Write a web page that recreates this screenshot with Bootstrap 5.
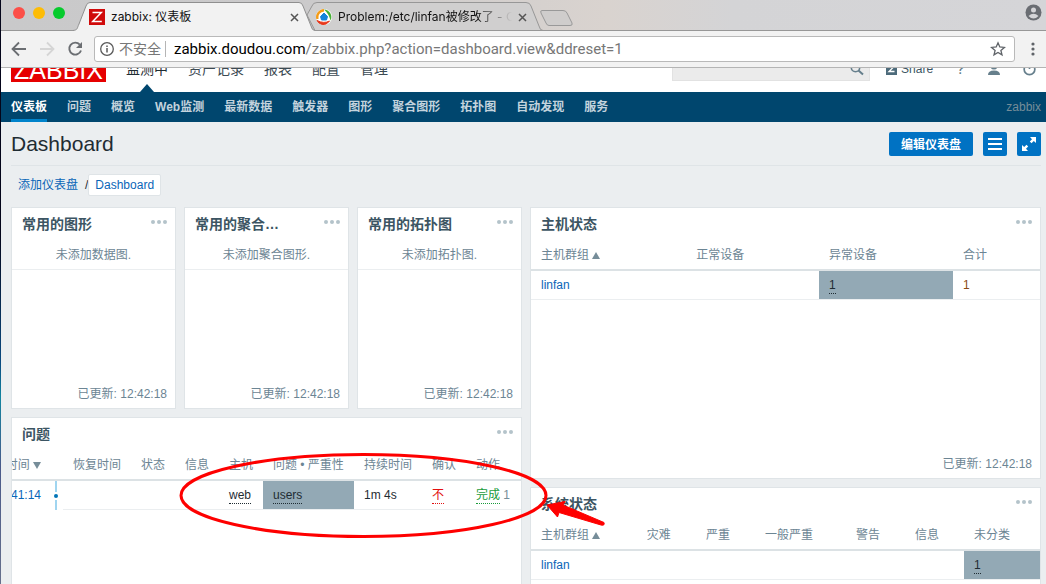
<!DOCTYPE html>
<html lang="zh-CN">
<head>
<meta charset="utf-8">
<meta name="viewport" content="width=device-width, initial-scale=1">
<title>zabbix: 仪表板</title>
<link href="https://cdn.jsdelivr.net/npm/bootstrap@5.3.0/dist/css/bootstrap.min.css" rel="stylesheet">
<style>
  body { font-family: "Liberation Sans", "Noto Sans CJK SC", sans-serif; font-size: 12px; line-height: 16px; color: #1f2c33; background: #ebeef0; }
  a { color: #0a66b8; text-decoration: none; }
  svg { display: block; flex: none; }

  /* browser window */
  .win { padding-left: 1px; background: linear-gradient(#04051a 0 40%, #0a4a80 62%, #1284a0 68%, #4a5a8a 80%, #66708c) left / 1px 100% no-repeat; }
  .tabstrip { height: 31px; background: linear-gradient(90deg, #c9c9ca, #cbcacb 30%, #d9d3cf 58%, #d4d4d6 70%, #d5d5d8); border-bottom: 1px solid #979797; font-family: Inter, "Noto Sans CJK SC", sans-serif; color: #111; }
  .lights { width: 72px; gap: 8px; padding-left: 12px; height: 25px; }
  .lights i { width: 12px; height: 12px; border-radius: 50%; }
  .tab { width: 242px; height: 31px; padding: 3px 16px 0 16px; margin-right: -8px; gap: 6px; }
  .tab-back { width: 236px; padding-left: 9px; }
  .tab-bg { position: absolute; left: 0; top: 0; z-index: -1; }
  .tab button, .toolbar button, .dots { border: 0; background: none; padding: 0; }
  .tab-name { -webkit-mask-image: linear-gradient(90deg, #000 80%, transparent); mask-image: linear-gradient(90deg, #000 80%, transparent); }
  .toolbar { height: 37px; background: #f2f2f2; border-bottom: 1px solid #b4b4b4; padding: 0 3px 0 10px; }
  .omni { height: 26px; background: #fff; border: 1px solid #b9b9b9; border-radius: 3px; font: 14px/20px Roboto, "Noto Sans CJK SC", sans-serif; color: #777; margin-left: 11px; }
  .address { font-size: 15px; }
  .omni-sep { width: 1px; height: 16px; background: #b5b5b5; }

  /* zabbix header, scrolled half out of view */
  .topbar { height: 24px; background: #fff; }
  .topbar-row { height: 46px; margin-top: -22px; padding: 0 10px; }
  .logo { background: #e60000; color: #fff; width: 95px; height: 25px; font-size: 25px; line-height: 27px; }
  .topmenu { gap: 20px; font-size: 14px; line-height: 20px; padding-left: 20px; }
  .topmenu a { color: #3c4a53; }
  .topmenu .active { color: #1f2c33; position: relative; }
  .topmenu .active::after { content: ""; position: absolute; left: 14px; top: 25px; border: 7px solid transparent; border-bottom: 8px solid #00466e; border-top: 0; }
  .search { width: 198px; height: 24px; background: #ebebeb; border: 1px solid #e2e2e2; padding-right: 5px; }
  .search input { background: none; border: 0; min-width: 0; }
  .tool { margin-right: 23px; color: #667f8c; }
  .share { color: #3c5563; }
  .subnav { height: 30px; background: #00466e; padding: 0 5px 0 10px; gap: 20px; font-weight: 700; }
  .subnav a { color: #c3d3dd; line-height: 30px; height: 30px; }
  .subnav .active { color: #fff; box-shadow: inset 0 -3px #0083cb; }
  .user { color: #768d99; font-weight: 400; }

  /* dashboard */
  main { padding: 0 5px 0 10px; }
  h1 { font-size: 21px; line-height: 24px; font-weight: 400; }
  .title-row { height: 44px; border-bottom: 1px solid #dfe4e7; gap: 10px; }
  .act { height: 24px; min-width: 24px; border: 0; border-radius: 2px; background: #0072c3; color: #fff; font-size: 12px; line-height: 26px; font-weight: 700; padding: 0; }
  .act-wide { width: 84px; }
  .crumbs { height: 41px; padding: 0 0 3px 7px; }
  .here { background: #fff; border: 1px solid #dfe4e7; border-radius: 2px; height: 22px; line-height: 20px; padding: 0 6px; }
  .slash { margin-left: 7px; }
  .panel { background: #fff; border: 1px solid #dfe4e7; }
  .h-small { min-height: 202px; }
  .h-mid { min-height: 272px; }
  .panel-head { height: 32px; padding: 0 8px 0 10px; }
  h2 { font-size: 14px; line-height: 20px; font-weight: 700; color: #3c5563; }
  .dots { color: #b4c3ca; height: 16px; margin-top: -4px; }
  .none { height: 30px; line-height: 31px; border-bottom: 1px solid #ebeef0; text-align: center; color: #6c8594; }
  .foot { height: 30px; line-height: 32px; padding-right: 8px; text-align: right; color: #6c8594; }
  .grid { width: 100%; table-layout: fixed; border-collapse: separate; border-spacing: 0; white-space: nowrap; }
  .grid th { height: 31px; font-weight: 400; color: #6c8594; padding: 0 0 0 10px; border-bottom: 2px solid #dce2e5; }
  .grid td { height: 29px; padding: 0 0 0 10px; border-bottom: 1px solid #ebeef0; }
  .grid .sev { background: #93a9b5; color: #1f2c33; background-clip: padding-box; }
  .dot-link { color: #1f2c33; border-bottom: 1px dotted; display: inline-block; line-height: 15px; }
  .up, .down { display: inline-block; border: 4px solid transparent; }
  .up { border-bottom: 7px solid #768d99; border-top: 0; }
  .down { border-top: 7px solid #768d99; border-bottom: 0; }
  /* the problem table is wider than its panel and scrolled to its end */
  .wide { width: calc(100% + 29px); flex: none; }
  .grid .time { padding: 0 6px 0 0; text-align: right; border-bottom-color: #fff; }
  .grid th.time { border-bottom-color: #dce2e5; }
  .grid .line { padding: 0 0 0 7px; border-bottom: 0; }
  .mark-up { position: absolute; left: 166px; top: 33px; z-index: 3; pointer-events: none; }
  .c-time { width: 64px; } .c-line { width: 16px; } .c-4 { width: 68px; } .c-2 { width: 44px; } .c-act { width: 55px; }
  .a1 { width: 30.5%; } .a2 { width: 26.1%; } .a3 { width: 26.3%; }
  .b1 { width: 20.8%; } .b2 { width: 11.6%; } .b3 { width: 17.9%; }
</style>
</head>
<body>
<svg class="d-none">
  <symbol id="more" viewBox="0 0 16 4"><g fill="currentColor"><circle cx="2" cy="2" r="2"/><circle cx="8" cy="2" r="2"/><circle cx="14" cy="2" r="2"/></g></symbol>
</svg>
<div class="win vh-100 overflow-hidden d-flex flex-column">
  <div class="tabstrip d-flex flex-shrink-0">
    <div class="lights d-flex align-items-center"><i style="background:#fc4f48"></i><i style="background:#fdbc06"></i><i style="background:#06cb2d"></i></div>
    <div class="tab position-relative d-flex align-items-center" style="z-index:2">
      <svg class="tab-bg" width="242" height="31"><path d="M0 30.5C5 30 4 28 6 24L13 6Q14 2.500 17 2.500H226Q229 2.500 230 6L238 26Q239 30.500 242 30.500V31H0Z" fill="#f2f2f2"/><path d="M0 30.500C5 30 4 28 6 24L13 6Q14 2.500 17 2.500H226Q229 2.500 230 6L238 26Q239 30.500 242 30.500" fill="none" stroke="#8f8f8f"/></svg>
      <svg width="16" height="16"><path fill="#d00a0a" d="M0 0H16V16H0Z"/><path d="M3.500 3.500H12.300L3.700 12.500H12.800" fill="none" stroke="#fff" stroke-width="1.500"/></svg>
      <span class="flex-grow-1">zabbix: 仪表板</span>
      <button type="button" aria-label="关闭"><svg width="9" height="9"><path d="M1 1L8 8M8 1L1 8" stroke="#555" stroke-width="1.500"/></svg></button>
    </div>
    <div class="tab tab-back position-relative d-flex align-items-center" style="z-index:1">
      <svg class="tab-bg" width="236" height="31"><path d="M0 15L5 6Q6 2.500 10 2.500H219Q223 2.500 224 6L232 26Q233 30.500 236 30.500H8Z" fill="#d0cfcf" stroke="#979797"/></svg>
      <svg width="16" height="16"><circle cx="8" cy="8" r="8" fill="#fff"/><path d="M1.500 10A7 7 0 0 1 8 1.200" fill="none" stroke="#f49b16" stroke-width="2.400"/><path d="M8 0.500A7.500 7.500 0 0 1 14.500 11.500Q13 5 8 0.500Z" fill="#48b035"/><path d="M1 11.500Q8 15 13.500 12Q9 18 3 14Z" fill="#e8381b" stroke="#e8381b"/><path d="M8 4L11.500 7.500L10.500 11H5.500L4.500 7.500Z" fill="#1583da" stroke="#1583da" stroke-linejoin="round"/></svg>
      <span class="flex-grow-1 text-nowrap overflow-hidden tab-name">Problem:/etc/linfan被修改了 - C</span>
      <button type="button" aria-label="关闭"><svg width="9" height="9"><path d="M1 1L8 8M8 1L1 8" stroke="#555" stroke-width="1.500"/></svg></button>
    </div>
    <svg class="mt-2" width="38" height="20"><path d="M7 2.500H28Q31 2.500 32 5L37 15Q38 17.500 35 17.500H14Q12 17.500 11 15L6 5Q5 2.500 7 2.500Z" fill="#cfcdcc" stroke="#999"/></svg>
    <svg class="ms-auto me-1 mt-1" width="17" height="17"><circle cx="8.500" cy="8.500" r="8" fill="#6a6d73"/><circle cx="8.500" cy="6" r="2.500" fill="#d5d5d8"/><path d="M3.500 12Q8.500 7.500 13.500 12Q8.500 17 3.500 12Z" fill="#d5d5d8"/></svg>
  </div>
  <div class="toolbar d-flex align-items-center flex-shrink-0">
    <button type="button" aria-label="后退"><svg width="16" height="16"><path d="M15 8H2M8 1.500L1.500 8L8 14.500" fill="none" stroke="#6b6e72" stroke-width="1.800"/></svg></button>
    <button type="button" class="ms-2 ps-1" aria-label="前进"><svg width="16" height="16"><path d="M1 8H14M8 1.500L14.500 8L8 14.500" fill="none" stroke="#d5d5d5" stroke-width="1.800"/></svg></button>
    <button type="button" class="ms-2 ps-1" aria-label="刷新"><svg width="16" height="16"><path d="M12.800 3.600A6 6 0 1 0 14 9.500" fill="none" stroke="#6b6e72" stroke-width="1.900"/><path d="M15 1V7H9Z" fill="#6b6e72"/></svg></button>
    <div class="omni d-flex align-items-center flex-grow-1 me-2 px-1">
      <svg class="me-1" width="16" height="16"><circle cx="8" cy="8" r="6.300" fill="none" stroke="#5a5a5a" stroke-width="1.300"/><path d="M8 7V11.500M8 4.500V6" stroke="#5a5a5a" stroke-width="1.500"/></svg>
      <span>不安全</span><span class="omni-sep ms-1 me-2"></span>
      <span class="address text-nowrap"><span class="text-black">zabbix.doudou.com</span>/zabbix.php?action=dashboard.view&amp;ddreset=1</span>
      <svg class="ms-auto me-1" width="16" height="16"><path d="M8 1.800L9.800 6L14.400 6.400L10.900 9.400L12 13.900L8 11.500L4 13.900L5.100 9.400L1.600 6.400L6.200 6Z" fill="none" stroke="#5f6368" stroke-width="1.300"/></svg>
    </div>
    <button type="button" class="px-2" aria-label="菜单"><svg width="4" height="16"><g fill="#5f6368"><circle cx="2" cy="3" r="1.600"/><circle cx="2" cy="8" r="1.600"/><circle cx="2" cy="13" r="1.600"/></g></svg></button>
  </div>

  <header class="flex-shrink-0">
    <div class="topbar overflow-hidden">
      <div class="topbar-row d-flex align-items-center">
        <a href="#" class="logo text-center">ZABBIX</a>
        <nav class="topmenu d-flex me-auto text-nowrap"><a href="#" class="active">监测中</a><a href="#">资产记录</a><a href="#">报表</a><a href="#">配置</a><a href="#">管理</a></nav>
        <div class="search d-flex align-items-center me-3"><input class="flex-grow-1" type="text" aria-label="搜索"><svg width="14" height="14"><circle cx="5.500" cy="5.500" r="4.200" fill="none" stroke="#667f8c" stroke-width="1.600"/><path d="M8.500 8.500L13 12.500" stroke="#667f8c" stroke-width="2"/></svg></div>
        <a href="#" class="tool d-flex align-items-center"><svg class="me-1" width="11" height="12"><path fill="#4d6b7b" d="M0 0H11V12H0Z"/><path d="M3 3.500H8L3 8.500H8.500" fill="none" stroke="#fff" stroke-width="1.300"/></svg><span class="share">Share</span></a>
        <a href="#" class="tool fs-6">?</a>
        <svg class="tool" width="12" height="14"><g fill="#667f8c"><circle cx="6" cy="4" r="3.500"/><path d="M0 13Q0 8.500 6 8.500T12 13Z"/></g></svg>
        <svg width="13" height="14"><path d="M3.500 3A5.300 5.300 0 1 0 9.500 3M6.500 1V7" fill="none" stroke="#667f8c" stroke-width="1.700"/></svg>
      </div>
    </div>
    <nav class="subnav d-flex text-nowrap">
      <a href="#" class="active">仪表板</a><a href="#">问题</a><a href="#">概览</a><a href="#">Web监测</a><a href="#">最新数据</a><a href="#">触发器</a><a href="#">图形</a><a href="#">聚合图形</a><a href="#">拓扑图</a><a href="#">自动发现</a><a href="#">服务</a>
      <span class="user ms-auto align-self-center">zabbix</span>
    </nav>
  </header>

  <main class="flex-grow-1 overflow-hidden">
    <div class="title-row d-flex align-items-center">
      <h1 class="m-0 me-auto">Dashboard</h1>
      <button type="button" class="act act-wide">编辑仪表盘</button>
      <button type="button" class="act d-flex align-items-center justify-content-center" aria-label="菜单"><svg width="14" height="12"><path d="M0 1H14M0 6H14M0 11H14" stroke="#fff" stroke-width="2"/></svg></button>
      <button type="button" class="act d-flex align-items-center justify-content-center" aria-label="全屏"><svg width="14" height="14"><path d="M8 0H14V6L11.800 4L9.500 6.200L7.800 4.500L10 2.200ZM6 14H0V8L2.200 10L4.500 7.800L6.200 9.500L4 11.800Z" fill="#fff"/></svg></button>
    </div>
    <div class="crumbs d-flex align-items-center">
      <a href="#">添加仪表盘</a><span class="slash">/</span><a href="#" class="here">Dashboard</a>
    </div>
    <div class="row g-2">
      <div class="col-6">
        <div class="row g-2">
          <div class="col-4"><section class="panel h-small d-flex flex-column">
            <div class="panel-head d-flex align-items-center justify-content-between"><h2 class="m-0">常用的图形</h2><button type="button" class="dots" aria-label="更多"><svg width="16" height="4"><use href="#more"/></svg></button></div>
            <div class="none">未添加数据图.</div><div class="foot mt-auto">已更新: 12:42:18</div>
          </section></div>
          <div class="col-4"><section class="panel h-small d-flex flex-column">
            <div class="panel-head d-flex align-items-center justify-content-between"><h2 class="m-0">常用的聚合…</h2><button type="button" class="dots" aria-label="更多"><svg width="16" height="4"><use href="#more"/></svg></button></div>
            <div class="none">未添加聚合图形.</div><div class="foot mt-auto">已更新: 12:42:18</div>
          </section></div>
          <div class="col-4"><section class="panel h-small d-flex flex-column">
            <div class="panel-head d-flex align-items-center justify-content-between"><h2 class="m-0">常用的拓扑图</h2><button type="button" class="dots" aria-label="更多"><svg width="16" height="4"><use href="#more"/></svg></button></div>
            <div class="none">未添加拓扑图.</div><div class="foot mt-auto">已更新: 12:42:18</div>
          </section></div>
          <div class="col-12"><section class="panel h-mid position-relative">
            <div class="panel-head d-flex align-items-center justify-content-between"><h2 class="m-0">问题</h2><button type="button" class="dots" aria-label="更多"><svg width="16" height="4"><use href="#more"/></svg></button></div>
            <div class="d-flex justify-content-end overflow-hidden">
              <table class="grid wide">
                <colgroup><col class="c-time"><col class="c-line"><col class="c-4"><col class="c-2"><col class="c-2"><col class="c-2"><col><col class="c-4"><col class="c-2"><col class="c-act"></colgroup>
                <thead><tr><th class="time">时间 <i class="down"></i></th><th></th><th>恢复时间</th><th>状态</th><th>信息</th><th>主机</th><th>问题 • 严重性</th><th>持续时间</th><th>确认</th><th>动作</th></tr></thead>
                <tbody><tr><td class="time"><a href="#">12:41:14</a></td>
                  <td class="line"><svg width="4" height="29"><path d="M2 0V11M2 19V29" stroke="#a0d5f0" stroke-width="2"/><circle cx="2" cy="15" r="2" fill="#0275b8"/></svg></td>
                  <td></td><td></td><td></td><td><a href="#" class="dot-link">web</a></td><td class="sev"><a href="#" class="dot-link">users</a></td><td>1m 4s</td>
                  <td><a href="#" class="dot-link" style="color:#e31010">不</a></td><td style="color:#768d99"><a href="#" class="dot-link" style="color:#1a9c3c">完成</a> 1</td></tr></tbody>
              </table>
            </div>
            <svg class="mark-up" width="430" height="90"><ellipse cx="185.500" cy="44.500" rx="182.500" ry="41" fill="none" stroke="#fe0000" stroke-width="3"/><path d="M369 54L387 50.500L385 54L426 71.500Q427 75 423 74L381 61.500L379.500 66Z" fill="#fe0000" stroke="#fe0000" stroke-linejoin="round"/></svg>
          </section></div>
        </div>
      </div>
      <div class="col-6">
        <section class="panel h-mid d-flex flex-column mb-2">
          <div class="panel-head d-flex align-items-center justify-content-between"><h2 class="m-0">主机状态</h2><button type="button" class="dots" aria-label="更多"><svg width="16" height="4"><use href="#more"/></svg></button></div>
          <table class="grid">
            <colgroup><col class="a1"><col class="a2"><col class="a3"><col></colgroup>
            <thead><tr><th>主机群组 <i class="up"></i></th><th>正常设备</th><th>异常设备</th><th>合计</th></tr></thead>
            <tbody><tr><td><a href="#">linfan</a></td><td></td><td class="sev"><a href="#" class="dot-link">1</a></td><td style="color:#8a4a14">1</td></tr></tbody>
          </table>
          <div class="foot mt-auto">已更新: 12:42:18</div>
        </section>
        <section class="panel h-mid">
          <div class="panel-head d-flex align-items-center justify-content-between"><h2 class="m-0">系统状态</h2><button type="button" class="dots" aria-label="更多"><svg width="16" height="4"><use href="#more"/></svg></button></div>
          <table class="grid">
            <colgroup><col class="b1"><col class="b2"><col class="b2"><col class="b3"><col class="b2"><col class="b2"><col></colgroup>
            <thead><tr><th>主机群组 <i class="up"></i></th><th>灾难</th><th>严重</th><th>一般严重</th><th>警告</th><th>信息</th><th>未分类</th></tr></thead>
            <tbody><tr><td><a href="#">linfan</a></td><td></td><td></td><td></td><td></td><td></td><td class="sev"><a href="#" class="dot-link">1</a></td></tr></tbody>
          </table>
        </section>
      </div>
    </div>
  </main>
</div>
<script src="https://cdn.jsdelivr.net/npm/bootstrap@5.3.0/dist/js/bootstrap.bundle.min.js"></script>
</body>
</html>
